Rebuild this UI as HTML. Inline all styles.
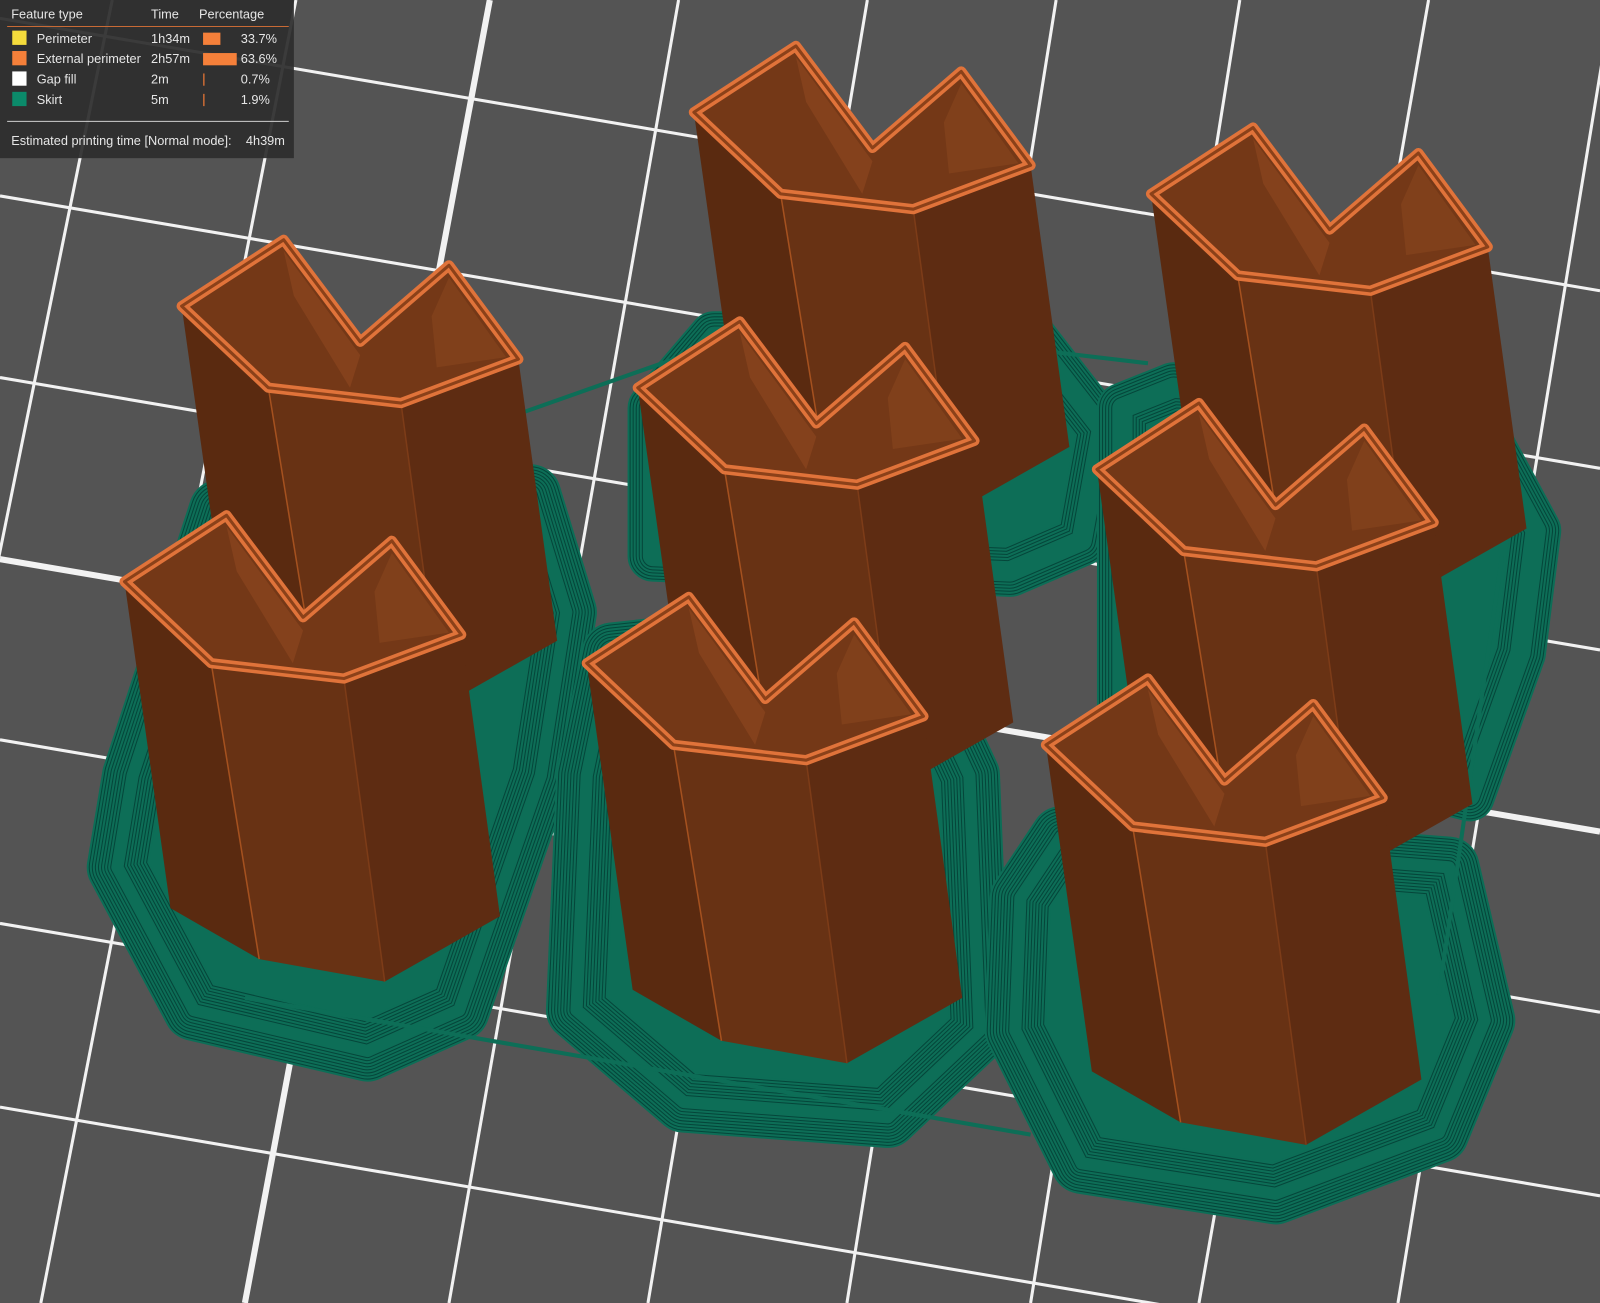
<!DOCTYPE html>
<html><head><meta charset="utf-8"><style>
html,body{margin:0;padding:0;background:#545454;width:1600px;height:1303px;overflow:hidden;position:relative}
svg{display:block;position:absolute;left:0;top:0}
text{font-family:"Liberation Sans","DejaVu Sans",sans-serif;font-size:12.5px;fill:#e6e6e6}
</style></head><body>
<svg width="1600" height="1303" viewBox="0 0 1568 1277" preserveAspectRatio="none" xmlns="http://www.w3.org/2000/svg">
<defs>
<path id="b1" d="M215 500 L520 485 L555 600 L530 760 L450 990 L360 1030 L190 990 L115 850 L130 760 Z"/>
<path id="b2" d="M600 640 L880 610 L950 760 L960 1010 L870 1095 L670 1080 L565 990 L575 760 Z"/>
<path id="b3" d="M1040 820 L1420 850 L1455 1000 L1410 1110 L1250 1170 L1060 1140 L995 1010 L1000 880 Z"/>
<path id="b4" d="M640 400 L700 330 L1010 330 L1080 420 L1060 530 L990 560 L640 545 Z"/>
<path id="b5" d="M1100 400 L1150 380 L1440 400 L1505 520 L1490 640 L1440 780 L1100 690 Z"/>
<g id="rg" fill="none" stroke-linejoin="round">
</g>
<g id="col">
  <polygon points="0,70 85,150 132,440 45,390" fill="#5a2a10"/>
  <polygon points="85,150 215,165 255,462 132,440" fill="#683214"/>
  <polygon points="215,165 330,122 368,398 255,462" fill="#5e2c12"/>
  <line x1="85" y1="150" x2="132" y2="440" stroke="#a5511f" stroke-width="1.5"/>
  <line x1="215" y1="165" x2="255" y2="462" stroke="#7d3c18" stroke-width="1.5"/>
  <polygon points="0,70 100,5 175,105 262,30 330,122 215,165 85,150" fill="#743817"/>
  <polygon points="100,16 175,118 165,150 110,60" fill="#84411c"/>
  <polygon points="262,42 318,120 250,130 245,80" fill="#80401b"/>
  <polygon points="0,70 100,5 175,105 262,30 330,122 215,165 85,150" fill="none" stroke="#e0733a" stroke-width="10" stroke-linejoin="round"/>
  <polygon points="0,70 100,5 175,105 262,30 330,122 215,165 85,150" fill="none" stroke="#8b4119" stroke-width="3" stroke-linejoin="round"/>
</g>
</defs>
<rect width="1568" height="1277" fill="#545454"/>
<g stroke="#f2f2f2" stroke-width="3">
<line x1="0" y1="18" x2="1568" y2="285"/>
<line x1="0" y1="192" x2="1568" y2="459"/>
<line x1="0" y1="370" x2="1568" y2="637"/>
<line x1="0" y1="548" x2="1568" y2="815" stroke-width="6"/>
<line x1="0" y1="725" x2="1568" y2="992"/>
<line x1="0" y1="905" x2="1568" y2="1172"/>
<line x1="0" y1="1085" x2="1568" y2="1352"/>
<line x1="110" y1="0" x2="-150" y2="1277"/>
<line x1="290" y1="0" x2="40" y2="1277"/>
<line x1="480" y1="0" x2="240" y2="1277" stroke-width="6"/>
<line x1="665" y1="0" x2="440" y2="1277"/>
<line x1="850" y1="0" x2="635" y2="1277"/>
<line x1="1035" y1="0" x2="830" y2="1277"/>
<line x1="1215" y1="0" x2="1010" y2="1277"/>
<line x1="1400" y1="0" x2="1175" y2="1277"/>
<line x1="1580" y1="0" x2="1370" y2="1277"/>
</g>
<g fill="none" stroke-linejoin="round">
<g>
<use href="#b1" stroke="#0d6e57" stroke-width="60" fill="#0d6e57"/>
<use href="#b1" stroke="#05463a" stroke-width="56"/><use href="#b1" stroke="#0d6e57" stroke-width="54"/>
<use href="#b1" stroke="#05463a" stroke-width="50"/><use href="#b1" stroke="#0d6e57" stroke-width="48"/>
<use href="#b1" stroke="#05463a" stroke-width="44"/><use href="#b1" stroke="#0d6e57" stroke-width="42"/>
<use href="#b1" stroke="#05463a" stroke-width="38"/><use href="#b1" stroke="#0d6e57" stroke-width="36"/>
<use href="#b1" stroke="#05463a" stroke-width="32"/><use href="#b1" stroke="#0d6e57" stroke-width="30"/>
<use href="#b1" stroke="#05463a" stroke-width="26"/><use href="#b1" stroke="#0d6e57" stroke-width="24"/>
<use href="#b1" stroke="#05463a" stroke-width="20"/><use href="#b1" stroke="#0d6e57" stroke-width="18"/>
<use href="#b1" stroke="#05463a" stroke-width="14"/><use href="#b1" stroke="#0d6e57" stroke-width="12"/>
</g>
<g>
<use href="#b2" stroke="#0d6e57" stroke-width="60" fill="#0d6e57"/>
<use href="#b2" stroke="#05463a" stroke-width="56"/><use href="#b2" stroke="#0d6e57" stroke-width="54"/>
<use href="#b2" stroke="#05463a" stroke-width="50"/><use href="#b2" stroke="#0d6e57" stroke-width="48"/>
<use href="#b2" stroke="#05463a" stroke-width="44"/><use href="#b2" stroke="#0d6e57" stroke-width="42"/>
<use href="#b2" stroke="#05463a" stroke-width="38"/><use href="#b2" stroke="#0d6e57" stroke-width="36"/>
<use href="#b2" stroke="#05463a" stroke-width="32"/><use href="#b2" stroke="#0d6e57" stroke-width="30"/>
<use href="#b2" stroke="#05463a" stroke-width="26"/><use href="#b2" stroke="#0d6e57" stroke-width="24"/>
<use href="#b2" stroke="#05463a" stroke-width="20"/><use href="#b2" stroke="#0d6e57" stroke-width="18"/>
<use href="#b2" stroke="#05463a" stroke-width="14"/><use href="#b2" stroke="#0d6e57" stroke-width="12"/>
</g>
<g>
<use href="#b3" stroke="#0d6e57" stroke-width="60" fill="#0d6e57"/>
<use href="#b3" stroke="#05463a" stroke-width="56"/><use href="#b3" stroke="#0d6e57" stroke-width="54"/>
<use href="#b3" stroke="#05463a" stroke-width="50"/><use href="#b3" stroke="#0d6e57" stroke-width="48"/>
<use href="#b3" stroke="#05463a" stroke-width="44"/><use href="#b3" stroke="#0d6e57" stroke-width="42"/>
<use href="#b3" stroke="#05463a" stroke-width="38"/><use href="#b3" stroke="#0d6e57" stroke-width="36"/>
<use href="#b3" stroke="#05463a" stroke-width="32"/><use href="#b3" stroke="#0d6e57" stroke-width="30"/>
<use href="#b3" stroke="#05463a" stroke-width="26"/><use href="#b3" stroke="#0d6e57" stroke-width="24"/>
<use href="#b3" stroke="#05463a" stroke-width="20"/><use href="#b3" stroke="#0d6e57" stroke-width="18"/>
<use href="#b3" stroke="#05463a" stroke-width="14"/><use href="#b3" stroke="#0d6e57" stroke-width="12"/>
</g>
<g>
<use href="#b4" stroke="#0d6e57" stroke-width="50" fill="#0d6e57"/>
<use href="#b4" stroke="#05463a" stroke-width="46"/><use href="#b4" stroke="#0d6e57" stroke-width="44"/>
<use href="#b4" stroke="#05463a" stroke-width="40"/><use href="#b4" stroke="#0d6e57" stroke-width="38"/>
<use href="#b4" stroke="#05463a" stroke-width="34"/><use href="#b4" stroke="#0d6e57" stroke-width="32"/>
<use href="#b4" stroke="#05463a" stroke-width="28"/><use href="#b4" stroke="#0d6e57" stroke-width="26"/>
<use href="#b4" stroke="#05463a" stroke-width="22"/><use href="#b4" stroke="#0d6e57" stroke-width="20"/>
</g>
<g>
<use href="#b5" stroke="#0d6e57" stroke-width="50" fill="#0d6e57"/>
<use href="#b5" stroke="#05463a" stroke-width="46"/><use href="#b5" stroke="#0d6e57" stroke-width="44"/>
<use href="#b5" stroke="#05463a" stroke-width="40"/><use href="#b5" stroke="#0d6e57" stroke-width="38"/>
<use href="#b5" stroke="#05463a" stroke-width="34"/><use href="#b5" stroke="#0d6e57" stroke-width="32"/>
<use href="#b5" stroke="#05463a" stroke-width="28"/><use href="#b5" stroke="#0d6e57" stroke-width="26"/>
<use href="#b5" stroke="#05463a" stroke-width="22"/><use href="#b5" stroke="#0d6e57" stroke-width="20"/>
</g>
</g>
<g stroke="#0d6e57" stroke-width="4" fill="none">
<line x1="510" y1="405" x2="680" y2="345"/>
<line x1="1015" y1="343" x2="1125" y2="356"/>
<line x1="1472" y1="545" x2="1410" y2="975"/>
<line x1="240" y1="978" x2="1010" y2="1112"/>
</g>
<use href="#col" x="680" y="40"/>
<use href="#col" x="1128" y="120"/>
<use href="#col" x="178" y="230"/>
<use href="#col" x="625" y="310"/>
<use href="#col" x="1075" y="390"/>
<use href="#col" x="122" y="500"/>
<use href="#col" x="575" y="580"/>
<use href="#col" x="1025" y="660"/>
<rect x="0" y="0" width="288" height="155" fill="#2d2d2d" fill-opacity="0.93"/>
<text x="11" y="18">Feature type</text>
<text x="148" y="18">Time</text>
<text x="195" y="18">Percentage</text>
<line x1="7" y1="26" x2="283" y2="26" stroke="#c86a35" stroke-width="1"/>
<rect x="12" y="30" width="14" height="14" fill="#f5dc3c"/>
<rect x="12" y="50" width="14" height="14" fill="#f5803a"/>
<rect x="12" y="70" width="14" height="14" fill="#ffffff"/>
<rect x="12" y="90" width="14" height="14" fill="#0b8a6a"/>
<text x="36" y="42">Perimeter</text><text x="148" y="42">1h34m</text>
<rect x="199" y="32" width="17" height="12" fill="#f5803a"/><text x="236" y="42">33.7%</text>
<text x="36" y="62">External perimeter</text><text x="148" y="62">2h57m</text>
<rect x="199" y="52" width="33" height="12" fill="#f5803a"/><text x="236" y="62">63.6%</text>
<text x="36" y="82">Gap fill</text><text x="148" y="82">2m</text>
<rect x="199" y="72" width="1.5" height="12" fill="#c86a35"/><text x="236" y="82">0.7%</text>
<text x="36" y="102">Skirt</text><text x="148" y="102">5m</text>
<rect x="199" y="92" width="1.5" height="12" fill="#c86a35"/><text x="236" y="102">1.9%</text>
<line x1="7" y1="119" x2="283" y2="119" stroke="#cfcfcf" stroke-width="1"/>
<text x="11" y="142">Estimated printing time [Normal mode]:</text>
<text x="241" y="142">4h39m</text>
</svg>
</body></html>
